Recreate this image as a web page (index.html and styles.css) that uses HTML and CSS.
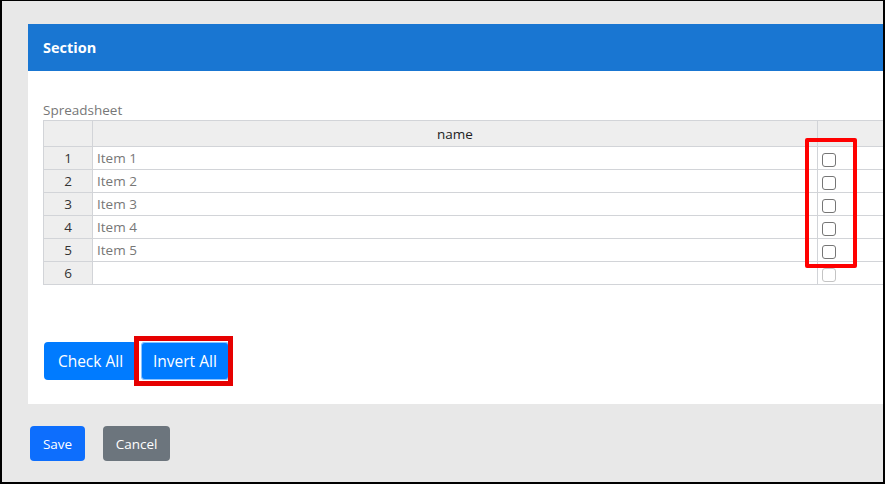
FILE: index.html
```html
<!DOCTYPE html>
<html>
<head>
<meta charset="utf-8">
<link rel="stylesheet" href="styles.css">
</head>
<body>
<div class="frame">
  <div class="panel">
    <div class="panel-header">Section</div>
    <div class="panel-body">
      <div class="sheet-label">Spreadsheet</div>
      <div class="sheet-wrap">
        <table class="sheet">
          <thead>
            <tr><th class="num"></th><th class="name">name</th><th class="chk"></th></tr>
          </thead>
          <tbody>
            <tr><td class="num">1</td><td class="name">Item 1</td><td class="chk"><input type="checkbox"></td></tr>
            <tr><td class="num">2</td><td class="name">Item 2</td><td class="chk"><input type="checkbox"></td></tr>
            <tr><td class="num">3</td><td class="name">Item 3</td><td class="chk"><input type="checkbox"></td></tr>
            <tr><td class="num">4</td><td class="name">Item 4</td><td class="chk"><input type="checkbox"></td></tr>
            <tr><td class="num">5</td><td class="name">Item 5</td><td class="chk"><input type="checkbox"></td></tr>
            <tr><td class="num">6</td><td class="name"></td><td class="chk"><input type="checkbox" disabled></td></tr>
          </tbody>
        </table>
        <div class="mark mark-checks"></div>
      </div>
      <div class="actions">
        <button class="btn btn-primary btn-wide">Check All</button>
        <div class="invert-holder">
          <button class="btn btn-primary btn-focus">Invert All</button>
          <div class="mark mark-invert"></div>
        </div>
      </div>
    </div>
  </div>
  <div class="footer">
    <button class="fbtn fbtn-save">Save</button>
    <button class="fbtn fbtn-cancel">Cancel</button>
  </div>
</div>
</body>
</html>
```
FILE: styles.css
```css
html, body {
  margin: 0;
  padding: 0;
}
body {
  font-family: "Open Sans", "Noto Sans", sans-serif;
  background: #e8e8e8;
}
.frame {
  width: 885px;
  height: 484px;
  box-sizing: border-box;
  border-style: solid;
  border-color: #000;
  border-width: 1px 2px 2px 2px;
  background: #e8e8e8;
  overflow: hidden;
  padding: 23px 0 0 26px;
}
.panel {
  background: #fff;
  height: 380px;
  overflow: hidden;
}
.panel-header {
  background: #1976d2;
  color: #fff;
  height: 47px;
  line-height: 47px;
  padding-left: 15px;
  font-weight: 700;
  font-size: 14.5px;
}
.panel-body {
  padding: 30px 0 0 15px;
}
.sheet-label {
  color: #777;
  font-size: 13.5px;
  line-height: 19px;
  height: 19px;
}
.sheet-wrap {
  position: relative;
  width: 900px;
}
.sheet {
  border-collapse: collapse;
  font-size: 13.5px;
  table-layout: fixed;
  width: 900px;
}
.sheet th, .sheet td {
  border: 1px solid #d2d4d8;
  padding: 0;
  height: 22px;
  line-height: 20px;
}
.sheet thead th {
  background: #eeeeee;
  height: 25px;
  font-weight: 400;
  color: #222;
}
.sheet .num {
  width: 48px;
  text-align: center;
  background: #eeeeee;
  color: #333;
}
.sheet .name {
  width: 724px;
}
.sheet td.name {
  color: #777;
  padding-left: 4px;
}
.sheet .chk {
  padding-left: 4px;
}
.sheet input[type=checkbox] {
  appearance: none;
  -webkit-appearance: none;
  width: 14px;
  height: 14px;
  margin: 3px 0 0 0;
  border: 1px solid #767676;
  border-radius: 3px;
  background: #fff;
  display: block;
  box-sizing: border-box;
}
.sheet input[type=checkbox]:disabled {
  border-color: #c4c4c4;
}
.mark {
  position: absolute;
  box-sizing: border-box;
  pointer-events: none;
}
.mark-checks {
  left: 762px;
  top: 18px;
  width: 52px;
  height: 130px;
  border: 4px solid #ff0000;
  border-radius: 2px;
}
.actions {
  display: flex;
  gap: 4px;
  margin-top: 57px;
  padding-left: 1px;
}
.invert-holder {
  position: relative;
}
.btn {
  height: 38px;
  border: none;
  border-radius: 4px;
  font-family: "Open Sans", "Noto Sans", sans-serif;
  font-size: 15.5px;
  color: #fff;
  padding: 0 12px;
  background: #007bff;
}
.btn-wide {
  width: 93px;
  padding: 0;
}
.btn-focus {
  box-shadow: inset 0 0 0 1px rgba(255,255,255,0.55);
}
.mark-invert {
  left: -7px;
  top: -6px;
  width: 99px;
  height: 50px;
  border: 5px solid #e60000;
}
.footer {
  display: flex;
  gap: 18px;
  margin-top: 22px;
  padding-left: 2px;
}
.fbtn {
  height: 35px;
  border: none;
  border-radius: 4px;
  font-family: "Open Sans", "Noto Sans", sans-serif;
  font-size: 13.5px;
  color: #fff;
  padding: 0 12px;
}
.fbtn-save {
  background: #0d6efd;
  width: 55px;
}
.fbtn-cancel {
  background: #6c757d;
  width: 67px;
}
```
